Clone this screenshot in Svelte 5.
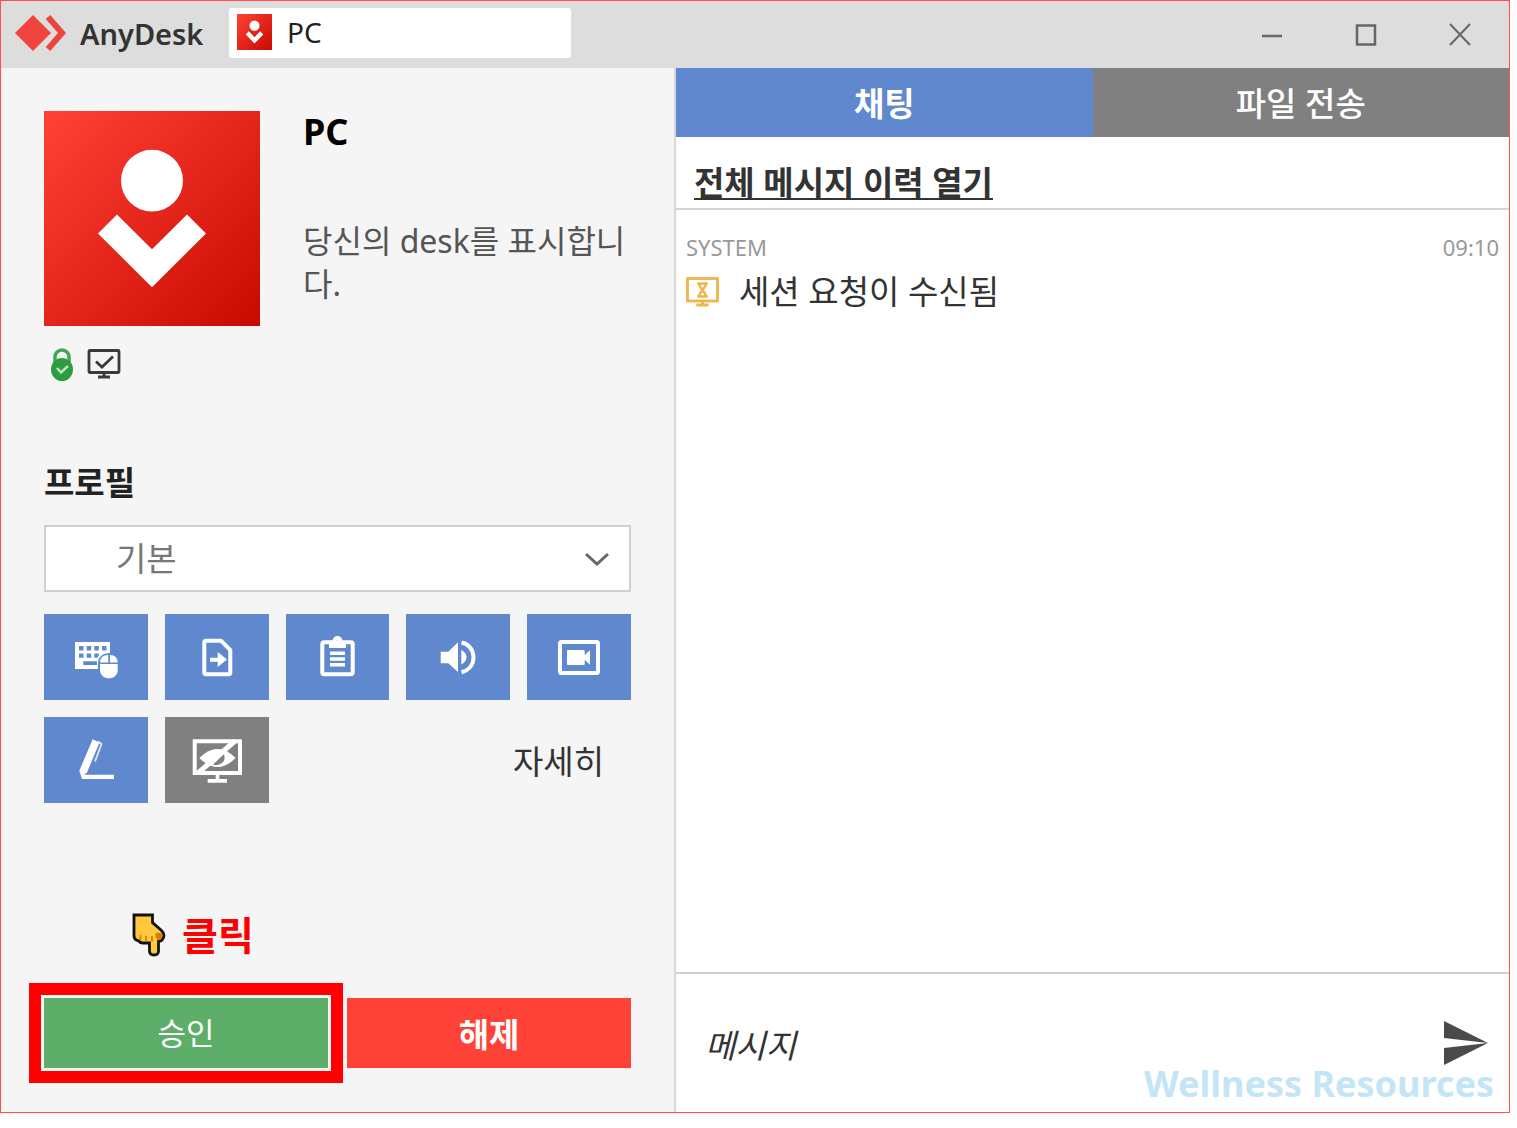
<script lang="ts">
  type Permission = { id: string; label: string; enabled: boolean };

  let permissions: Permission[] = $state([
    { id: "input", label: "키보드 및 마우스", enabled: true },
    { id: "file", label: "파일", enabled: true },
    { id: "clipboard", label: "클립보드", enabled: true },
    { id: "sound", label: "소리", enabled: true },
    { id: "record", label: "녹화", enabled: true },
    { id: "draw", label: "그리기", enabled: true },
    { id: "privacy", label: "프라이버시", enabled: false },
  ]);

  let activeTab: "chat" | "files" = $state("chat");
  let message = $state("");
</script>

{#snippet person()}
  <svg class="person" viewBox="0 0 216 216" preserveAspectRatio="none" aria-hidden="true">
    <circle cx="108" cy="70" r="31" fill="#fff" />
    <path d="M73 104 108 139 143 104 162 123 108 177 54 123Z" fill="#fff" />
  </svg>
{/snippet}

<div class="window">
  <header class="titlebar">
    <div class="brand">
      <svg width="52" height="38" viewBox="0 0 52 38" aria-hidden="true">
        <path d="M0 18 18 0 36 18 18 36Z" fill="#ef443b" />
        <path d="M33 2 47 18 33 34" fill="none" stroke="#ef443b" stroke-width="6" />
      </svg>
      <span>AnyDesk</span>
    </div>
    <div class="session-tab">
      <span class="session-tab__icon">{@render person()}</span>
      <span>PC</span>
    </div>
    <div class="window-controls">
      <button type="button" aria-label="최소화">
        <svg width="24" height="24" viewBox="0 0 24 24"><path d="M2 13H22" stroke="#666" stroke-width="2.5" /></svg>
      </button>
      <button type="button" aria-label="최대화">
        <svg width="24" height="24" viewBox="0 0 24 24"><path d="M3 2.5H21V21.5H3Z" fill="none" stroke="#666" stroke-width="2.5" /></svg>
      </button>
      <button type="button" aria-label="닫기">
        <svg width="24" height="24" viewBox="0 0 24 24"><path d="M2 1 22 22M22 1 2 22" stroke="#666" stroke-width="2" /></svg>
      </button>
    </div>
  </header>

  <main class="content">
    <section class="request">
      <div class="client">
        <div class="avatar">{@render person()}</div>
        <div class="client__info">
          <h1>PC</h1>
          <p>당신의 desk를 표시합니다.</p>
        </div>
      </div>

      <div class="status">
        <svg width="22" height="33" viewBox="0 0 22 33" aria-hidden="true">
          <path d="M4 15V9A7 7 0 0 1 18 9V15" fill="none" stroke="#43a756" stroke-width="3.5" />
          <ellipse cx="11" cy="21.5" rx="11" ry="11.5" fill="#2c9c40" />
          <path d="M6 20 10 24.5 17 18" fill="none" stroke="#bfe5c5" stroke-width="2.5" />
        </svg>
        <svg width="34" height="31" viewBox="0 0 34 31" aria-hidden="true">
          <rect x="2" y="1.5" width="30" height="22" rx="1" fill="none" stroke="#3a3a3a" stroke-width="2.8" />
          <path d="M17 24V28M11 28H23M9 12.500 15 18 26 7.500" fill="none" stroke="#3a3a3a" stroke-width="2.8" />
        </svg>
      </div>

      <h2><label for="profile">프로필</label></h2>
      <div class="profile">
        <select id="profile">
          <option>기본</option>
        </select>
        <svg width="24" height="14" viewBox="0 0 24 14" aria-hidden="true">
          <path d="M1 2 12 12 23 2" fill="none" stroke="#666" stroke-width="3" />
        </svg>
      </div>

      <div class="permissions">
        {#each permissions as p (p.id)}
          <button
            type="button"
            class="permission"
            class:off={!p.enabled}
            aria-label={p.label}
            aria-pressed={p.enabled}
            onclick={() => (p.enabled = !p.enabled)}
          >
            <svg width="56" height="56" viewBox="0 0 56 56" fill="#fff">
              {#if p.id === "input"}
                <path fill-rule="evenodd" d="M7 13H42V24C35 24 30 28 30 34V40H7ZM11 17V21.5H15.5V17ZM18.700 17V21.5H23.200V17ZM26.300 17V21.5H30.800V17ZM34 17V21.5H38.500V17ZM11 24.500V28.800H15.500V24.500ZM18.700 24.500V28.800H23.200V24.500ZM26.300 24.500V28.800H29.500L30.800 26.500V24.500ZM15.300 32.300V36H29V32.300Z" />
                <path d="M40.300 26V33.500H32C32 29 35 26 40.300 26ZM42 26C47 26 49.700 29 49.700 33.500H42ZM32 35H49.700V41C49.700 46 46 49.300 41 49.300S32 46 32 41Z" />
              {:else if p.id === "file"}
                <path d="M17 11.700H32L41.300 21V43.500Q41.300 45.300 39.500 45.300H17Q15.300 45.300 15.300 43.500V13.500Q15.300 11.700 17 11.700Z" fill="none" stroke="#fff" stroke-width="4" />
                <path d="M21 28.700H28.700V23L38 30.500 28.700 38V32.700H21Z" />
              {:else if p.id === "clipboard"}
                <rect x="13.300" y="13.300" width="30.400" height="32" rx="2" fill="none" stroke="#fff" stroke-width="4" />
                <path fill-rule="evenodd" d="M20 12H23.500A5 5 0 0 1 33.500 12H37V19H20ZM28.500 11A2 2 0 1 0 28.500 15 2 2 0 0 0 28.500 11Z" />
                <path d="M21 24.300H36M21 30H36M21 35.700H36" stroke="#fff" stroke-width="3.5" />
              {:else if p.id === "sound"}
                <path d="M10.700 22.700H18.300L28 13.300V43L18.300 34.300H10.700Z" />
                <path d="M31.300 21Q36.500 24 36.500 28.200T31.300 35.500Z" />
                <path d="M31.500 13.500C39 15 43.500 21 43.500 28.300S39 41.500 31.500 43.300" fill="none" stroke="#fff" stroke-width="4" />
              {:else if p.id === "record"}
                <rect x="9" y="13" width="38" height="31" rx="1.5" fill="none" stroke="#fff" stroke-width="4" />
                <path d="M17 21H32.500Q33.700 21 33.700 22.200V26L39 21.300V35.700L33.700 31V35Q33.700 36 32.500 36H17Q16 36 16 35V22Q16 21 17 21Z" />
              {:else if p.id === "draw"}
                <path d="M24.700 7.300 31.500 10.500 19 40.500 16 42.700H46V47H14L11.300 38.700Z" />
                <path d="M30 9.500 33.500 12 27 29.500" fill="none" stroke="#fff" stroke-width="1.8" opacity="0.8" />
              {:else}
                <path fill-rule="evenodd" d="M3.700 7.300H53V43H30.300V47H38V50.700H18.700V47H26.700V43H3.700ZM7.700 11.300V39H49V11.300Z" />
                <path d="M10.300 26Q28.500 8 46.700 26 28.500 44 10.300 26Z" />
                <path d="M24 32.500 35 22Q37 29 32 31.500 28 34 24 32.500Z" fill="#808080" />
                <path d="M9 41 46 9" stroke="#fff" stroke-width="5" />
              {/if}
            </svg>
          </button>
        {/each}
        <button type="button" class="details">자세히</button>
      </div>

      <div class="hint">
        <svg width="35" height="44" viewBox="0 0 35 44" aria-hidden="true">
          <path d="M3 2H21.500V9.500L30 17Q34 20.500 32.500 24.500T27.500 28.500V38Q27.500 42 23 42T18.500 38V30H12Q9 30 8 28 3 27 3 23Z" fill="#ffc83d" stroke="#111" stroke-width="2.8" />
          <path d="M31.500 21Q28 19 25 20 23 22 27 27.500 32 26 31.500 21Z" fill="#d67d00" />
          <path d="M9.500 22V27.500M15 23V28.500M21 23V28.500" stroke="#d98200" stroke-width="1.8" />
        </svg>
        <span>클릭</span>
      </div>

      <div class="actions">
        <button type="button" class="accept">승인</button>
        <button type="button" class="dismiss">해제</button>
      </div>
    </section>

    <section class="chat">
      <div class="tabs" role="tablist">
        <button type="button" role="tab" class:active={activeTab === "chat"} aria-selected={activeTab === "chat"} onclick={() => (activeTab = "chat")}>채팅</button>
        <button type="button" role="tab" class:active={activeTab === "files"} aria-selected={activeTab === "files"} onclick={() => (activeTab = "files")}>파일 전송</button>
      </div>
      <div class="history"><a href="#history">전체 메시지 이력 열기</a></div>

      <div class="messages">
        <div class="meta">
          <span>SYSTEM</span>
          <time>09:10</time>
        </div>
        <div class="entry">
          <svg width="33" height="30" viewBox="0 0 33 30" fill="none" stroke="#eeb548" stroke-width="2.8" aria-hidden="true">
            <rect x="1.5" y="1.5" width="30" height="22.5" />
            <path d="M16.500 24V28M10.300 28H22.500" />
            <path d="M11.300 6.500H21.700M11.300 19.500H21.700M13 6.500C13 10.500 20 15.500 20 19.500M20 6.500C20 10.500 13 15.500 13 19.500" stroke-width="2.5" />
          </svg>
          <span>세션 요청이 수신됨</span>
        </div>
      </div>

      <form class="composer" onsubmit={(e) => e.preventDefault()}>
        <input type="text" placeholder="메시지" aria-label="메시지" bind:value={message} />
        <button type="submit" aria-label="보내기">
          <svg width="45" height="44" viewBox="0 0 45 44" fill="#4a4a4a">
            <path d="M0 0 44 22 0 17ZM0 27 44 22 0 44Z" />
          </svg>
        </button>
      </form>
    </section>
  </main>

  <div class="watermark">Wellness Resources</div>
</div>

<style>
  :global(body) {
    margin: 0;
    background: #fff;
  }

  .window {
    box-sizing: border-box;
    position: relative;
    display: flex;
    flex-direction: column;
    min-height: calc(100vh - 15px);
    margin: 0 7px 15px 0;
    border: 1px solid #ff4f48;
    color: #333;
    font: 400 33px/44px "Noto Sans", "Noto Sans CJK KR", sans-serif;
  }

  button,
  input,
  select {
    margin: 0;
    padding: 0;
    border: 0;
    border-radius: 0;
    background: none;
    color: inherit;
    font: inherit;
  }

  button {
    cursor: pointer;
  }

  svg {
    display: block;
    flex: none;
  }

  .titlebar {
    display: flex;
    align-items: center;
    height: 67px;
    background: #ddd;
  }

  .brand {
    display: flex;
    align-items: center;
    gap: 13px;
    width: 228px;
    padding: 0 0 2px 14px;
    box-sizing: border-box;
    font-size: 29px;
    font-weight: 600;
  }

  .session-tab {
    display: flex;
    align-items: center;
    gap: 15px;
    width: 342px;
    height: 50px;
    margin-bottom: 4px;
    padding: 0 0 2px 8px;
    box-sizing: border-box;
    border-radius: 3px;
    background: #fff;
    color: #222;
    font-size: 28px;
  }

  .session-tab__icon {
    width: 35px;
    height: 36px;
    background: linear-gradient(135deg, #ff4238, #c80900);
  }

  .person {
    width: 100%;
    height: 100%;
  }

  .window-controls {
    display: flex;
    margin-left: auto;
    padding-right: 2px;
  }

  .window-controls button {
    display: grid;
    place-items: center;
    width: 94px;
    height: 67px;
  }

  .content {
    flex: 1;
    display: grid;
    grid-template-columns: minmax(0, 673fr) minmax(0, 835fr);
  }

  .request {
    display: flex;
    flex-direction: column;
    padding: 43px 43px 44px;
    background: #f5f5f5;
  }

  .client {
    display: flex;
    gap: 43px;
  }

  .avatar {
    flex: none;
    width: 216px;
    height: 215px;
    background: linear-gradient(135deg, #ff4238, #c80900);
  }

  .client__info h1 {
    margin: 0;
    color: #000;
    font-size: 36px;
    line-height: 42px;
    font-weight: 700;
  }

  .client__info p {
    margin: 66px 0 0;
    color: #555;
    font-size: 32px;
    line-height: 43px;
  }

  .status {
    display: flex;
    align-items: center;
    gap: 14px;
    margin: 22px 0 80px;
    padding-left: 7px;
  }

  h2 {
    margin: 0 0 20px;
    color: #222;
    font-size: 33px;
    line-height: 44px;
    font-weight: 700;
  }

  .profile {
    position: relative;
  }

  .profile select {
    width: 100%;
    height: 67px;
    padding: 0 70px;
    box-sizing: border-box;
    appearance: none;
    border: 2px solid #d0d0d0;
    background: #fff;
    color: #777;
  }

  .profile svg {
    position: absolute;
    top: 27px;
    right: 22px;
    pointer-events: none;
  }

  .permissions {
    display: grid;
    grid-template-columns: repeat(5, 1fr);
    gap: 17px;
    margin-top: 22px;
  }

  .permission {
    display: grid;
    place-items: center;
    height: 86px;
    background: #5f88ce;
  }

  .permission.off {
    background: #808080;
  }

  .details {
    grid-column: 3 / -1;
    justify-self: end;
    padding: 4px 27px 0 0;
  }

  .hint {
    display: flex;
    align-items: center;
    gap: 16px;
    margin: auto 0 41px;
    padding-left: 87px;
    color: #f00;
    font-size: 39px;
    font-weight: 700;
  }

  .actions {
    display: flex;
    gap: 19px;
  }

  .actions button {
    flex: 1;
    height: 70px;
    color: #fff;
  }

  .actions .accept {
    background: #5dae69;
    box-shadow: 0 0 0 3px #f5f5f5, 0 0 0 15px #f00;
    font-size: 31px;
  }

  .actions .dismiss {
    padding-top: 4px;
    background: #ff4238;
    font-weight: 700;
  }

  .chat {
    display: flex;
    flex-direction: column;
    border-left: 2px solid #d6d6d6;
  }

  .tabs {
    display: flex;
  }

  .tabs button {
    flex: 1;
    height: 69px;
    padding-top: 2px;
    background: #808080;
    color: #fff;
    font-weight: 500;
  }

  .tabs .active {
    background: #5f88ce;
    font-weight: 700;
  }

  .history {
    padding: 24px 18px 3px;
    border-bottom: 2px solid #d6d6d6;
    font-weight: 700;
  }

  .history a {
    color: #333;
    text-decoration-thickness: 2px;
    text-underline-offset: 3px;
  }

  .messages {
    flex: 1;
    padding: 19px 10px;
  }

  .meta {
    display: flex;
    justify-content: space-between;
    color: #999;
    font-size: 22px;
    line-height: 36px;
  }

  .entry {
    display: flex;
    align-items: center;
    gap: 20px;
    margin-top: 5px;
  }

  .composer {
    display: flex;
    align-items: center;
    height: 138px;
    padding: 0 20px 0 29px;
    border-top: 2px solid #d0d0d0;
  }

  .composer input {
    flex: 1;
    min-width: 0;
    height: 60px;
    padding-top: 4px;
    outline: none;
    font-style: italic;
  }

  .composer input::placeholder {
    color: #333;
    opacity: 1;
  }

  .watermark {
    position: absolute;
    right: 15px;
    bottom: 6px;
    color: #c3e5f5;
    font-size: 36px;
    font-weight: 700;
    pointer-events: none;
  }
</style>
